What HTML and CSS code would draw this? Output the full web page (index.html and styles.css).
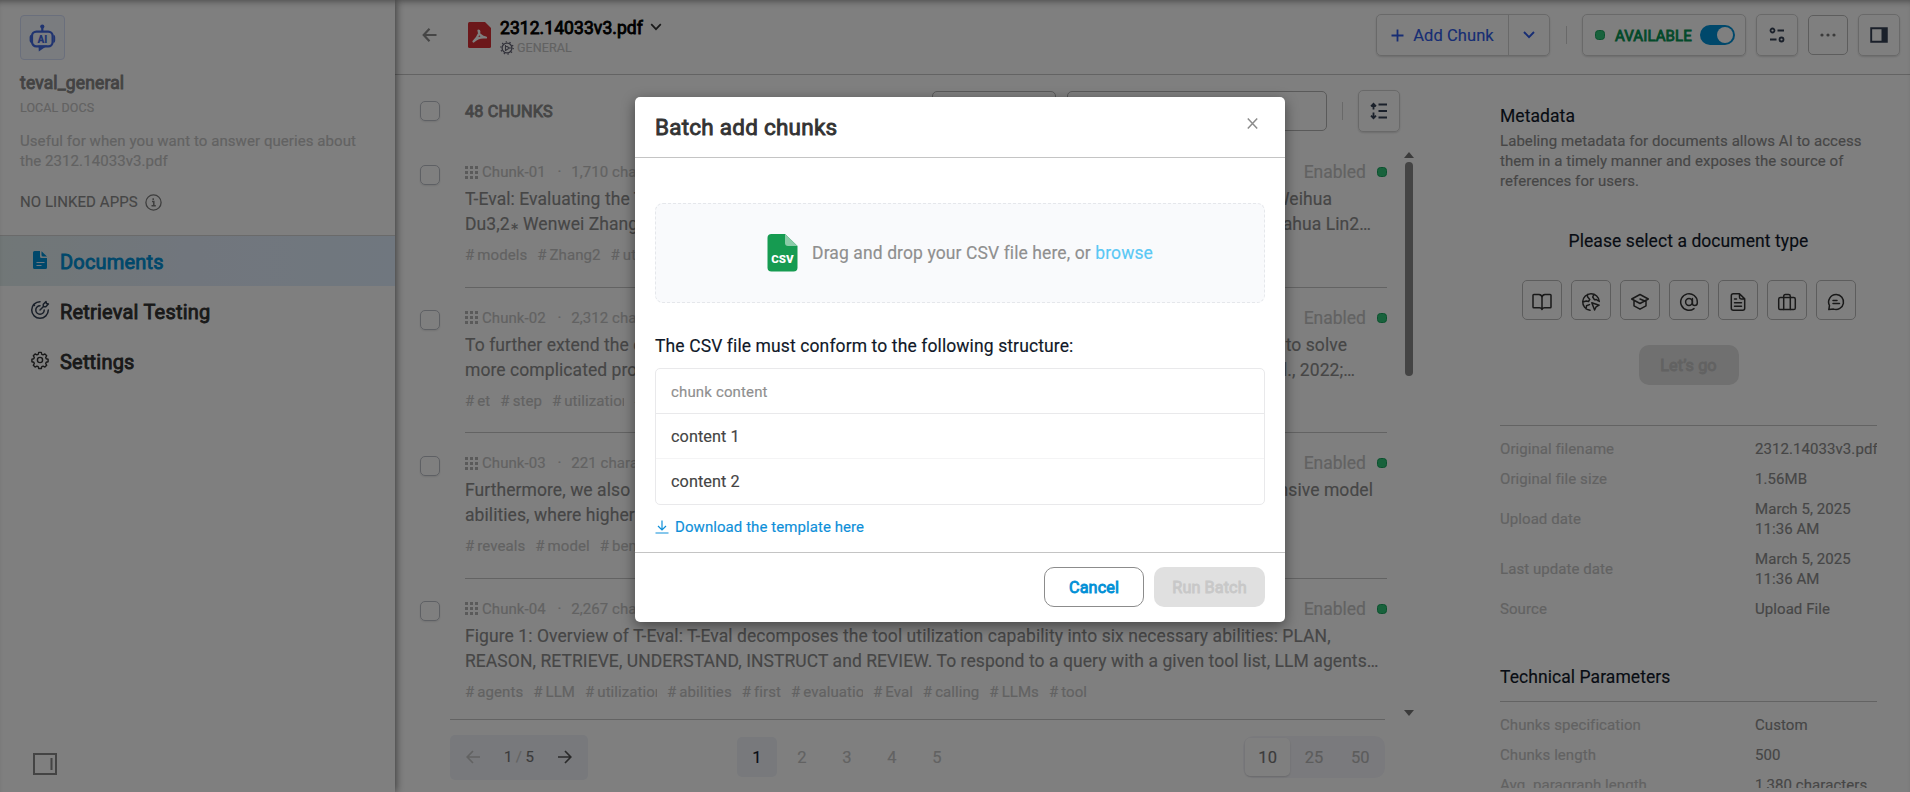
FILE: index.html
```html
<!DOCTYPE html>
<html lang="en">
<head>
<meta charset="utf-8">
<title>teval_general</title>
<link rel="stylesheet" href="styles.css">
</head>
<body>
<div class="app">
  <aside class="sidebar">
    <div class="dataset">
      <div class="logo">
        <svg width="27" height="28" viewBox="0 0 27 28"><g fill="none" stroke="#4169e1" stroke-width="2.2"><rect x="3" y="7.6" width="20.6" height="14.8" rx="4.4"/><path d="M13.3 3v5"/></g><circle cx="13.3" cy="2.6" r="2.1" fill="#4169e1"/><path d="M2.4 10.5v8.6Q.6 18.6.6 16.6V13Q.6 11 2.4 10.5zM24.4 10.5v8.6q1.8-.5 1.8-2.500V13q0-2-1.800-2.500zM9.500 21.500h9L9.800 27.500z" fill="#4169e1"/><text x="13.400" y="18.600" text-anchor="middle" class="logo-text">AI</text></svg>
      </div>
      <div class="dataset-name strong">teval_general</div>
      <div class="dataset-kind">LOCAL DOCS</div>
      <div class="dataset-desc">Useful for when you want to answer queries about the 2312.14033v3.pdf</div>
      <div class="linked">NO LINKED APPS
        <svg width="17" height="17" viewBox="0 0 17 17" fill="none" stroke="#7c7c7c" stroke-width="1.300"><circle cx="8.500" cy="8.500" r="7.600"/><path d="M7 7.500h1.800v4.300M6.500 11.800h4.300M8.200 4.200v1.800" stroke-width="1.500"/></svg>
      </div>
    </div>
    <nav>
      <div class="nav-item active">
        <svg class="nav-icon" width="20" height="20" viewBox="0 0 20 20"><path d="M4.500 1H10v5.500q0 1.500 1.500 1.500H17v9.500q0 1.500-1.500 1.500h-11Q3 19 3 17.500v-15Q3 1 4.500 1z" fill="#0090d6"/><path d="M11.500 1.300 17 6.500h-4q-1.500 0-1.500-1.500z" fill="#0090d6"/><path d="M6.500 12.500h8M6.500 15.500h5" stroke="#e0effe" stroke-width="1.200"/></svg>
        <span class="strong">Documents</span>
      </div>
      <div class="nav-item">
        <svg class="nav-icon" width="20" height="20" viewBox="0 0 20 20" fill="none" stroke="#344054" stroke-width="1.500" stroke-linecap="round" stroke-linejoin="round"><path d="M10 1.700a8.300 8.300 0 1 0 8.300 8.300M10 5.800a4.200 4.200 0 1 0 4.200 4.200M10 10l3.500-3.500M13.300 6.700V4.200L16 1.600l.5 1.900 1.900.5-2.600 2.700zM3.500 4.500l1 1"/></svg>
        <span class="strong">Retrieval Testing</span>
      </div>
      <div class="nav-item">
        <svg class="nav-icon" width="20" height="20" viewBox="0 0 20 20" fill="none" stroke="#333" stroke-width="1.400" stroke-linejoin="round"><circle cx="10" cy="10" r="2.600"/><path d="M8.700 2.400h2.600l.5 2 1.300.5 1.800-1 1.800 1.800-1 1.800.5 1.300 1.900.4v2.500l-1.900.5-.5 1.300 1 1.800-1.800 1.800-1.800-1-1.300.5-.5 1.900H8.700l-.5-1.900-1.300-.5-1.800 1-1.800-1.800 1-1.800-.5-1.300-1.900-.5V9.200l1.900-.4.5-1.300-1-1.800 1.800-1.800 1.800 1 1.300-.5z"/></svg>
        <span class="strong">Settings</span>
      </div>
    </nav>
    <svg class="collapse" width="26" height="24" viewBox="0 0 26 24" fill="none" stroke="#888" stroke-width="2"><path d="M2 2h22v20H2zM19.500 6v12"/></svg>
  </aside>

  <main class="main">
    <header class="header">
      <svg class="back" width="16" height="16" viewBox="0 0 16 16" fill="none" stroke="#8c8c8c" stroke-width="2.200"><path d="M14.500 8H2M7.500 1.800 1.700 8l5.800 6.200"/></svg>
      <svg class="pdf" width="23" height="26" viewBox="0 0 23 26"><path d="M1.500 0H17l6 6v18.500q0 1.500-1.500 1.500h-20Q0 26 0 24.500v-23Q0 0 1.500 0z" fill="#d92f35"/><path d="M10.500 8.500c1.800 0 .8 5.200-5 11 3.500-3.800 7.500-4.700 12.500-4-4.300-.5-7.500-3.500-7.500-7z" fill="none" stroke="#fff" stroke-width="2.200" stroke-linejoin="round"/></svg>
      <div class="doc">
        <div class="doc-title"><span class="strong">2312.14033v3.pdf</span>
          <svg width="12" height="8" viewBox="0 0 12 8" fill="none" stroke="#333" stroke-width="1.700"><path d="M1.200 1.200 6 6.200l4.800-5"/></svg></div>
        <div class="doc-mode"><svg width="14" height="14" viewBox="0 0 14 14" fill="none" stroke="#667" stroke-width="1.300"><circle cx="7" cy="7" r="4.900"/><circle cx="7" cy="7" r="6.200" stroke-dasharray="1.300 2.570" stroke-width="1.300"/><path d="M5.500 4v6M5.500 4.500 9.500 7l-4 2.500M9 7h3" stroke-width="1.100"/></svg>GENERAL</div>
      </div>
      <div class="actions">
        <div class="split">
          <div class="add"><svg width="13" height="13" viewBox="0 0 13 13" stroke="#2f5be8" stroke-width="1.800"><path d="M6.500.5v12M.5 6.500h12"/></svg>Add Chunk</div>
          <div class="more"><svg width="12" height="8" viewBox="0 0 12 8" fill="none" stroke="#2f5be8" stroke-width="1.900"><path d="M1 1l5 5.200L11 1"/></svg></div>
        </div>
        <i class="sep"></i>
        <div class="status"><i class="dot"></i><span class="strong">AVAILABLE</span><i class="toggle"></i></div>
        <div class="sq tall"><svg width="18" height="18" viewBox="0 0 18 18" fill="none" stroke="#344054" stroke-width="1.800"><circle cx="4.500" cy="4.500" r="2"/><circle cx="13.500" cy="13.500" r="2"/><path d="M9.500 4.500H16M2 13.500h6.500"/></svg></div>
        <div class="sq"><svg width="16" height="4" viewBox="0 0 16 4" fill="#777"><circle cx="2" cy="2" r="1.600"/><circle cx="8" cy="2" r="1.600"/><circle cx="14" cy="2" r="1.600"/></svg></div>
        <div class="sq tall last"><svg width="18" height="16" viewBox="0 0 18 16"><path d="M1.200 1.200h15.600v13.600H1.200z" fill="none" stroke="#344054" stroke-width="1.900"/><path d="M11.500 1H17v14h-5.500z" fill="#344054"/></svg></div>
      </div>
    </header>

    <div class="content">
      <section class="chunks">
        <div class="toolbar">
          <i class="check"></i><span class="count strong">48 CHUNKS</span>
          <div class="field short"></div><div class="field long"></div><i class="sep"></i>
          <div class="sq tall"><svg width="18" height="18" viewBox="0 0 18 18" fill="none" stroke="#344054" stroke-width="1.800"><path d="M8.500 2.500h8.500M8.500 9h8.500M8.500 15.500h8.500M3.500 2v5.500M3.500 10.500V16M1 4.300l2.500-2.500L6 4.300M1 13.700l2.500 2.500L6 13.700"/></svg></div>
        </div>
        <div class="scroller">
          <div class="list">
            <article class="row">
              <i class="check"></i>
              <div class="chunk">
                <div class="meta"><i class="grid"></i><span>Chunk-01</span><b>·</b><span>1,710 characters</span><em>Enabled</em><i class="dot"></i></div>
                <div class="line e1"><span>T-Eval: Evaluating the Tool Utilization</span><span>Weihua</span></div>
                <div class="line e2"><span>Du3,2<small>∗</small> Wenwei Zhang2</span><span>Dahua Lin2…</span></div>
                <div class="tags"><span>models</span><span>Zhang2</span><span>utilization</span></div>
              </div>
            </article>
            <article class="row">
              <i class="check"></i>
              <div class="chunk">
                <div class="meta"><i class="grid"></i><span>Chunk-02</span><b>·</b><span>2,312 characters</span><em>Enabled</em><i class="dot"></i></div>
                <div class="line e3"><span>To further extend the capability</span><span>to solve</span></div>
                <div class="line e4"><span>more complicated problems</span><span>al., 2022;…</span></div>
                <div class="tags"><span>et</span><span>step</span><span>utilization</span><span>tool</span></div>
              </div>
            </article>
            <article class="row">
              <i class="check"></i>
              <div class="chunk">
                <div class="meta"><i class="grid"></i><span>Chunk-03</span><b>·</b><span>221 characters</span><em>Enabled</em><i class="dot"></i></div>
                <div class="line e5"><span>Furthermore, we also present</span><span>extensive model</span></div>
                <div class="line"><span>abilities, where higher scores</span></div>
                <div class="tags"><span>reveals</span><span>model</span><span>benchmark</span></div>
              </div>
            </article>
            <article class="row">
              <i class="check"></i>
              <div class="chunk">
                <div class="meta"><i class="grid"></i><span>Chunk-04</span><b>·</b><span>2,267 characters</span><em>Enabled</em><i class="dot"></i></div>
                <div class="line"><span>Figure 1: Overview of T-Eval: T-Eval decomposes the tool utilization capability into six necessary abilities: PLAN,</span></div>
                <div class="line"><span>REASON, RETRIEVE, UNDERSTAND, INSTRUCT and REVIEW. To respond to a query with a given tool list, LLM agents…</span></div>
                <div class="tags"><span>agents</span><span>LLM</span><span>utilization</span><span>abilities</span><span>first</span><span>evaluation</span><span>Eval</span><span>calling</span><span>LLMs</span><span>tool</span></div>
              </div>
            </article>
          </div>
          <div class="scrollbar"><i class="up"></i><i class="thumb"></i><i class="down"></i></div>
        </div>
        <footer class="pager">
          <div class="stepper">
            <svg width="14" height="14" viewBox="0 0 14 14" fill="none" stroke="#c4c4c4" stroke-width="1.700"><path d="M14 7H1.500M7 1 1.200 7 7 13"/></svg>
            <span>1 <s>/</s> 5</span>
            <svg width="14" height="14" viewBox="0 0 14 14" fill="none" stroke="#555" stroke-width="1.700"><path d="M0 7h12.500M7 1l5.800 6L7 13"/></svg>
          </div>
          <div class="pages"><span class="on">1</span><span>2</span><span>3</span><span>4</span><span>5</span></div>
          <div class="sizes"><span class="on">10</span><span>25</span><span>50</span></div>
        </footer>
      </section>

      <section class="details">
        <h3>Metadata</h3>
        <p>Labeling metadata for documents allows AI to access them in a timely manner and exposes the source of references for users.</p>
        <div class="pick">Please select a document type</div>
        <div class="types">
          <div class="type"><svg viewBox="0 0 20 20"><path d="M10 5.500v12M10 5.500Q9.800 2.700 7 2.500H1.800q-.8 0-.8.800V15q0 .8.800.8H7.500Q9.500 15.800 10 17.500 10.500 15.800 12.500 15.800h5.700q.8 0 .8-.8V3.300q0-.8-.8-.8H13Q10.200 2.700 10 5.500z"/></svg></div>
          <div class="type"><svg viewBox="0 0 20 20"><path d="M9 18.300A8.300 8.300 0 1 1 18.300 9.500M6.500 2.500v2.300l2.300 2.600-1.300 2.100-2.200-.5L1.800 10M5 16.800l.5-3 3-1.200M13 2.300 11.700 5l1.700 2.700 2.100-.2 1.500 1.300M10.800 10.800l7.300 2.400-3 1.600-1.500 3.200z"/></svg></div>
          <div class="type"><svg viewBox="0 0 20 20"><path d="M10 2.500 18.300 7l-8.300 4.500L1.700 7zM4 8.500v5.300l6 3.400 6-3.400V8.500M10 7l6 2.500"/></svg></div>
          <div class="type"><svg viewBox="0 0 20 20"><circle cx="10" cy="10" r="3.400"/><path d="M13.400 6.600v4.600q0 2.300 2.400 2.300t2.500-2.500v-1A8.300 8.300 0 1 0 15 16.600"/></svg></div>
          <div class="type"><svg viewBox="0 0 20 20"><path d="M11.500 1.700H5.300q-2 0-2 2v12.600q0 2 2 2h9.400q2 0 2-2V6.900zM11.500 1.700v3.500q0 1.700 1.700 1.700h3.500M6.500 7h2M6.500 10.700h7M6.500 14.300h7"/></svg></div>
          <div class="type"><svg viewBox="0 0 20 20"><rect x="1.700" y="5.600" width="16.600" height="12" rx="1.600"/><path d="M6.700 17.500V4.200q0-1.700 1.700-1.700h3.200q1.700 0 1.700 1.700v13.300"/></svg></div>
          <div class="type"><svg viewBox="0 0 20 20"><path d="M10.300 2.500a7.500 7.500 0 1 1-2.700 14.600L2.800 17.600 3.500 13.500A7.500 7.500 0 0 1 10.300 2.500zM7 8.500h4M7 11.500h6.500"/></svg></div>
        </div>
        <div class="go strong">Let’s go</div>
        <dl class="props first">
          <dt>Original filename</dt><dd>2312.14033v3.pdf</dd>
          <dt>Original file size</dt><dd>1.56MB</dd>
          <dt>Upload date</dt><dd>March 5, 2025 11:36 AM</dd>
          <dt>Last update date</dt><dd>March 5, 2025 11:36 AM</dd>
          <dt>Source</dt><dd>Upload File</dd>
        </dl>
        <h3 class="tech">Technical Parameters</h3>
        <dl class="props">
          <dt>Chunks specification</dt><dd>Custom</dd>
          <dt>Chunks length</dt><dd>500</dd>
          <dt>Avg. paragraph length</dt><dd>1,380 characters</dd>
        </dl>
      </section>
    </div>
  </main>
</div>

<div class="overlay">
  <div class="modal">
    <div class="modal-head"><span class="strong">Batch add chunks</span>
      <svg width="11" height="11" viewBox="0 0 11 11" stroke="#8c8c8c" stroke-width="1.500"><path d="M.8.5l9.400 10M10.200.5l-9.400 10"/></svg></div>
    <div class="modal-body">
      <div class="drop">
        <svg width="31" height="38" viewBox="0 0 31 38"><path d="M4.500 0H18l12.500 12v21.500q0 4-4 4h-22q-4 0-4-4V4q0-4 4-4z" fill="#169b51"/><path d="M18 0l12.500 12H21q-3 0-3-3z" fill="#8bcca8"/><text x="15.500" y="28.600" text-anchor="middle" class="csv">CSV</text></svg>
        <span>Drag and drop your CSV file here, or <a>browse</a></span>
      </div>
      <div class="structure">The CSV file must conform to the following structure:</div>
      <div class="table">
        <div class="th">chunk content</div>
        <div class="td">content 1</div>
        <div class="td">content 2</div>
      </div>
      <div class="download"><svg width="14" height="14" viewBox="0 0 14 14" fill="none" stroke="#0e8fd9" stroke-width="1.200"><path d="M.5 13h13M7 .5v9.300M3 6l4 4 4-4"/></svg>Download the template here</div>
    </div>
    <div class="modal-foot"><div class="btn cancel strong">Cancel</div><div class="btn run strong">Run Batch</div></div>
  </div>
</div>
</body>
</html>
```

FILE: styles.css
```css
* { box-sizing: border-box; }
html, body { margin: 0; height: 100%; overflow: hidden; }
body { font-family: Roboto, "Liberation Sans", sans-serif; font-size: 16px; letter-spacing: .07px; -webkit-text-stroke: .15px currentColor; color: #101828; background: #fff; }
svg { display: block; flex: none; -webkit-text-stroke: 0; letter-spacing: 0; }
i { display: block; flex: none; font-style: normal; }
.strong { -webkit-text-stroke: 0.85px currentColor; }

.app { display: flex; height: 792px; }

/* Sidebar */
.sidebar { position: relative; z-index: 1; width: 395px; flex: none; display: flex; flex-direction: column; box-shadow: 1px 0 8px rgba(0,0,0,.55); clip-path: inset(0 -14px 0 0); }
.dataset { height: 236px; padding: 15px 20px 0; border-bottom: 1px solid #d4d4d4; }
.logo { width: 45px; height: 45px; border: 1px solid #d5def8; border-radius: 4px; background: #f5f8ff; display: flex; align-items: center; justify-content: center; }
.logo-text { font: 900 10px Roboto, sans-serif; fill: #4169e1; }
.dataset-name { margin-top: 11px; font-size: 17.5px; line-height: 25px; letter-spacing: .15px; color: #868686; }
.dataset-kind { margin-top: 2px; font-size: 12.500px; line-height: 20px; color: #c4c4c4; }
.dataset-desc { margin-top: 13px; font-size: 15px; line-height: 20px; color: #c4c4c4; }
.linked { margin-top: 20px; padding-top: 1px; display: flex; gap: 7px; align-items: center; font-size: 15px; line-height: 20px; color: #8c8c8c; }
.nav-item { display: flex; align-items: center; height: 50px; padding: 2px 0 0 30px; gap: 10px; font-size: 20px; letter-spacing: .2px; color: #333; }
.nav-item.active { color: #0090d6; background: linear-gradient(90deg, #e3eeef, #e3edfb 50%, #e0effe); }
.nav-icon { position: relative; top: -2px; }
.collapse { margin: auto 0 16px 32px; }

/* Header */
.main { flex: 1; min-width: 0; display: flex; flex-direction: column; }
.header { display: flex; height: 75px; padding: 0 10px 4px 28px; align-items: center; border-bottom: 1px solid #c6c6c6; }
.back { margin-left: -1px; }
.pdf { margin: 0 9px 0 30px; }
.doc { padding-top: 4px; }
.doc-title { display: flex; align-items: center; gap: 7px; font-size: 17.5px; line-height: 22px; color: #000; }
.doc-title svg { margin-top: -3px; }
.doc-mode { display: flex; align-items: center; gap: 3px; font-size: 12.5px; line-height: 18px; color: #c4c4c4; }
.actions { margin-left: auto; display: flex; align-items: center; }
.split { display: flex; width: 174px; height: 42px; border: 1px solid #d2d2d2; border-radius: 5px; box-shadow: 0 1px 2px rgba(0,0,0,.15); color: #2f5be8; font-size: 16.500px; }
.add { flex: 1; display: flex; align-items: center; justify-content: center; gap: 9px; }
.more { width: 41px; border-left: 1px solid #d2d2d2; display: flex; align-items: center; justify-content: center; }
.sep { width: 1px; height: 18px; background: #d2d2d2; margin: 0 15px 0 16px; }
.status { width: 164px; height: 42px; padding-left: 12px; display: flex; align-items: center; border: 1px solid #d2d2d2; border-radius: 5px; box-shadow: 0 1px 2px rgba(0,0,0,.15); color: #079455; font-size: 15px; margin-right: 10px; }
.dot { width: 10px; height: 10px; border-radius: 3.500px; background: #31c478; border: 1px solid #17a35c; }
.status span { margin: 2px 8px 0 10px; width: 77px; white-space: nowrap; letter-spacing: .1px; }
.toggle { width: 35px; height: 20px; border-radius: 10px; background: #0090d6; padding: 2px; }
.toggle::after { content: ""; display: block; width: 16px; height: 16px; border-radius: 8px; background: #fff; margin-left: auto; }
.sq { width: 40px; height: 40px; border: 1px solid #bbb; border-radius: 5px; display: flex; align-items: center; justify-content: center; margin-right: 10px; }
.sq.tall { width: 42px; height: 42px; border-color: #d2d2d2; box-shadow: 0 1px 2px rgba(0,0,0,.15); }
.sq.last { margin-right: 0; }

/* Chunk list */
.content { flex: 1; min-height: 0; display: flex; }
.chunks { width: 1025px; flex: none; display: flex; flex-direction: column; }
.toolbar { height: 72px; display: flex; align-items: center; padding-left: 25px; }
.check { width: 20px; height: 20px; border: 1px solid #bcc0c8; border-radius: 5px; box-shadow: 0 1px 2px rgba(0,0,0,.1); }
.count { margin-left: 25px; width: 467px; padding-top: 1px; font-size: 16.250px; letter-spacing: .15px; color: #8c8c8c; }
.field { height: 40px; border: 1px solid #b4b4b4; border-radius: 5px; }
.field.short { width: 124px; margin-right: 11px; }
.field.long { width: 260px; }
.toolbar .sep { margin: 0 15px; }
.scroller { height: 572px; display: flex; overflow: hidden; }
.list { width: 992px; margin-top: -5px; }
.row { display: flex; height: 145.500px; padding-left: 25px; }
.row .check { margin: 22.600px 25px 0 0; }
.chunk { width: 922px; padding-top: 17.600px; border-bottom: 1px solid #c6c6c6; overflow: hidden; }
.row:last-child .chunk { border: 0; }
.meta { display: flex; align-items: center; height: 25px; font-size: 15px; color: #c4c4c4; white-space: nowrap; }
.grid { width: 13px; height: 13px; margin-right: 4px; background: repeating-linear-gradient(90deg, transparent 0 3px, #fff 3px 5px), repeating-linear-gradient(#b4b4b4 0 3px, #fff 3px 5px); }
.meta b { width: 25.500px; padding-left: 2px; text-align: center; font-weight: 400; }
.meta em { margin-left: auto; font-style: normal; font-size: 17.500px; letter-spacing: 0; }
.meta .dot { margin-left: 11px; }
.line { display: flex; justify-content: space-between; height: 25px; line-height: 25px; font-size: 17.500px; color: #8c8c8c; white-space: nowrap; position: relative; top: 2.900px; }
.line small { font-size: 11px; letter-spacing: 0; }
.e1 { padding-right: 55px; }
.e2 { padding-right: 16px; }
.e3 { padding-right: 40px; }
.e4 { padding-right: 32px; }
.e5 { padding-right: 14px; }
.tags { display: flex; gap: 10px; margin-top: 10.800px; font-size: 15px; line-height: 20px; color: #c4c4c4; }
.tags span { max-width: 72px; overflow: hidden; white-space: nowrap; }
.tags span::before { content: "#"; margin-right: 3px; }
.scrollbar { width: 17px; margin-left: 13px; padding: 5px 0 3px 4px; display: flex; flex-direction: column; align-items: flex-start; }
.up, .down { border: 5px solid transparent; border-top: 0; border-bottom: 6px solid #777; }
.down { border-bottom: 0; border-top: 6px solid #777; margin-top: auto; }
.thumb { width: 8px; height: 214px; margin: 4px 0 0 1px; border-radius: 4px; background: #888; }

/* Pagination */
.pager { flex: 1; margin: 0 35px 0 55px; padding-top: 2px; border-top: 1px solid #c6c6c6; display: flex; align-items: center; justify-content: space-between; width: 935px; }
.stepper { width: 138px; height: 45px; padding: 0 16px; border-radius: 5px; background: #f0f3f9; display: flex; align-items: center; justify-content: space-between; font-size: 15px; word-spacing: -.5px; color: #777; }
.stepper s { text-decoration: none; color: #c4c4c4; }
.pages { display: flex; gap: 5px; margin-right: 137px; }
.pages span { width: 40px; line-height: 41px; height: 40px; text-align: center; font-size: 16.500px; color: #c4c4c4; border-radius: 5px; }
.pages .on { background: #f0f3f9; color: #101828; }
.sizes { display: flex; width: 142px; height: 42px; padding: 2px; gap: 1px; border-radius: 10px; background: #f5f5fa; font-size: 16.500px; color: #b9b9b9; }
.sizes span { width: 46px; line-height: 39px; height: 38px; text-align: center; border-radius: 5px; }
.sizes .on { background: #fff; color: #777; box-shadow: 0 1px 2px rgba(0,0,0,.15); }

/* Details */
.details { height: 713px; width: 457px; padding: 29px 0 0 80px; overflow: hidden; }
h3 { margin: 0; font-weight: 400; font-size: 17.500px; line-height: 25px; }
.details p { margin: 2px 0 0; font-size: 15px; line-height: 20px; color: #8c8c8c; }
.pick { margin-top: 38px; text-align: center; font-size: 17.500px; line-height: 25px; }
.types { display: flex; justify-content: center; gap: 9px; margin: 26px 0 25px; }
.type { width: 40px; height: 40px; border: 1px solid #bbb; border-radius: 5px; display: flex; align-items: center; justify-content: center; padding: 4px 0 0 1px; }
.type svg { width: 20px; height: 20px; fill: none; stroke: #333; stroke-width: 1.500; stroke-linejoin: round; stroke-linecap: round; }
.go { width: 100px; height: 40px; line-height: 41px; margin: 0 auto; border-radius: 10px; background: #e0e0e0; color: #c4c4c4; text-align: center; font-size: 16.250px; }
.props { margin: 0; border-top: 1px solid #c6c6c6; padding-top: 13px; display: grid; grid-template-columns: 255px 130px; row-gap: 10px; align-items: center; font-size: 15px; line-height: 20px; }
.props.first { margin-top: 40px; }
.props dt { color: #c4c4c4; }
.props dd { margin: 0; color: #8c8c8c; }
.props dd { padding-right: 6px; }
.props.first, .details .props { width: 377px; }
.tech { margin: 46px 0 11px; }

/* Modal */
.overlay { position: absolute; inset: 0; z-index: 5; display: flex; justify-content: center; align-items: flex-start; padding: 97px 0 0 10px; background: rgba(0,0,0,.5); box-shadow: inset 0 6px 7px -5px rgba(0,0,0,.45); }
.modal { width: 650px; height: 525px; background: #fff; border-radius: 5px; box-shadow: 0 4px 14px rgba(0,0,0,.45); display: flex; flex-direction: column; }
.modal-head { height: 61px; padding: 0 27px 0 20px; display: flex; align-items: center; justify-content: space-between; border-bottom: 1px solid #c4c4c4; font-size: 22.500px; letter-spacing: .24px; color: #333; }
.modal-head svg { margin-bottom: 7px; }
.modal-body { flex: 1; padding: 45px 20px 0; }
.drop { height: 100px; border: 1px dashed #e5e7eb; border-radius: 8px; background: #f9fafc; display: flex; align-items: center; justify-content: center; gap: 14px; font-size: 17.500px; letter-spacing: .1px; color: #8f8f8f; }
.drop a { color: #5ac8f5; }
.csv { font: 900 11.500px Roboto, sans-serif; fill: #fff; }
.structure { margin: 31px 0 9px; font-size: 17.500px; line-height: 25px; letter-spacing: .11px; }
.table { height: 137px; border: 1px solid #e9e9eb; border-radius: 5px; color: #444; }
.table div { height: 45px; line-height: 45px; padding-left: 15px; border-bottom: 1px solid #f4f4f5; font-size: 16.250px; }
.table .th { font-size: 15px; line-height: 46px; letter-spacing: .15px; color: #8f8f8f; border-color: #e9e9eb; }
.table div:last-child { border: 0; }
.download { display: flex; align-items: center; gap: 6px; margin-top: 12px; font-size: 15px; line-height: 20px; color: #0e8fd9; }
.modal-foot { height: 70px; padding: 14px 20px 0; border-top: 1px solid #c4c4c4; display: flex; justify-content: flex-end; gap: 10px; }
.btn { height: 40px; line-height: 41px; border-radius: 10px; text-align: center; font-size: 16.250px; }
.cancel { width: 100px; border: 1px solid #8c8c8c; line-height: 39px; color: #0090d6; }
.run { width: 111px; background: #e0e0e0; color: #c8c8c8; }
```
